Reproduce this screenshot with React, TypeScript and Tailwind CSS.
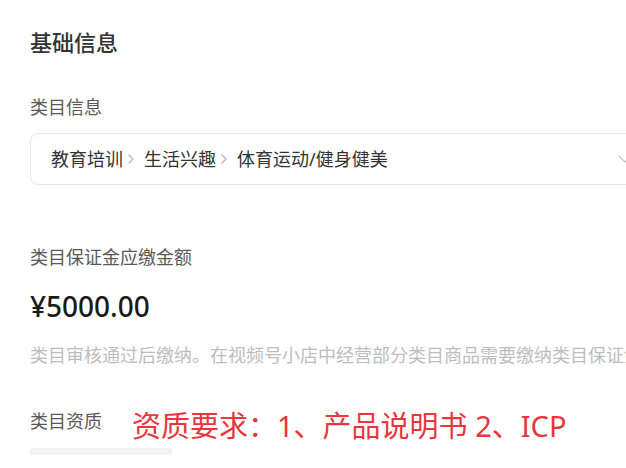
import React from 'react';

const font = { fontFamily: '"Noto Sans", "Noto Sans CJK SC", sans-serif' };

const Sep: React.FC = () => (
  <svg className="ml-[5px] mr-[10px] shrink-0" width="6" height="10" viewBox="0 0 6 10" fill="none">
    <path d="M1 1l4 4-4 4" stroke="#b5b5b5" strokeWidth="1.2" strokeLinecap="round" strokeLinejoin="round" />
  </svg>
);

const App: React.FC = () => {
  return (
    <div className="w-[626px] h-[468px] overflow-hidden bg-white" style={font}>
      <div className="pl-[30px] pt-[27px] w-[700px]">
        {/* Section title */}
        <h2 className="text-[22px] leading-[30px] font-medium text-[#333]">基础信息</h2>

        {/* Category */}
        <div className="mt-[38px] text-[18px] leading-[24px] text-[#595959]">类目信息</div>
        <div className="mt-[14px] w-[620px] h-[52px] rounded-[8px] border border-[#e6e6e6] flex items-center justify-between pl-[20px] pr-[17px]">
          <div className="flex items-center text-[18px] text-[#333] whitespace-nowrap">
            <span>教育培训</span>
            <Sep />
            <span>生活兴趣</span>
            <Sep />
            <span>体育运动/健身健美</span>
          </div>
          <svg width="14" height="9" viewBox="0 0 14 9" fill="none">
            <path d="M1 1l6 6 6-6" stroke="#c4c4c4" strokeWidth="1.4" strokeLinecap="round" strokeLinejoin="round" />
          </svg>
        </div>

        {/* Deposit */}
        <div className="mt-[60px] text-[18px] leading-[24px] text-[#595959]">类目保证金应缴金额</div>
        <div className="mt-[19px] text-[28px] leading-[36px] font-medium text-[#1a1a1a]">¥5000.00</div>
        <div className="mt-[19px] text-[18px] leading-[24px] text-[#bdbdbd] whitespace-nowrap">
          类目审核通过后缴纳。在视频号小店中经营部分类目商品需要缴纳类目保证金
        </div>

        {/* Qualification */}
        <div className="mt-[41px] flex items-start whitespace-nowrap">
          <span className="mt-[1px] text-[18px] leading-[24px] text-[#595959]">类目资质</span>
          <span className="ml-[30px] text-[29px] leading-[36px] text-[#e8363c]">资质要求：1、产品说明书 2、ICP</span>
        </div>
        <div className="mt-[4px] w-[142px] h-[7px] rounded-[2px] bg-[#f3f3f3]"></div>
      </div>
    </div>
  );
};

export default App;
